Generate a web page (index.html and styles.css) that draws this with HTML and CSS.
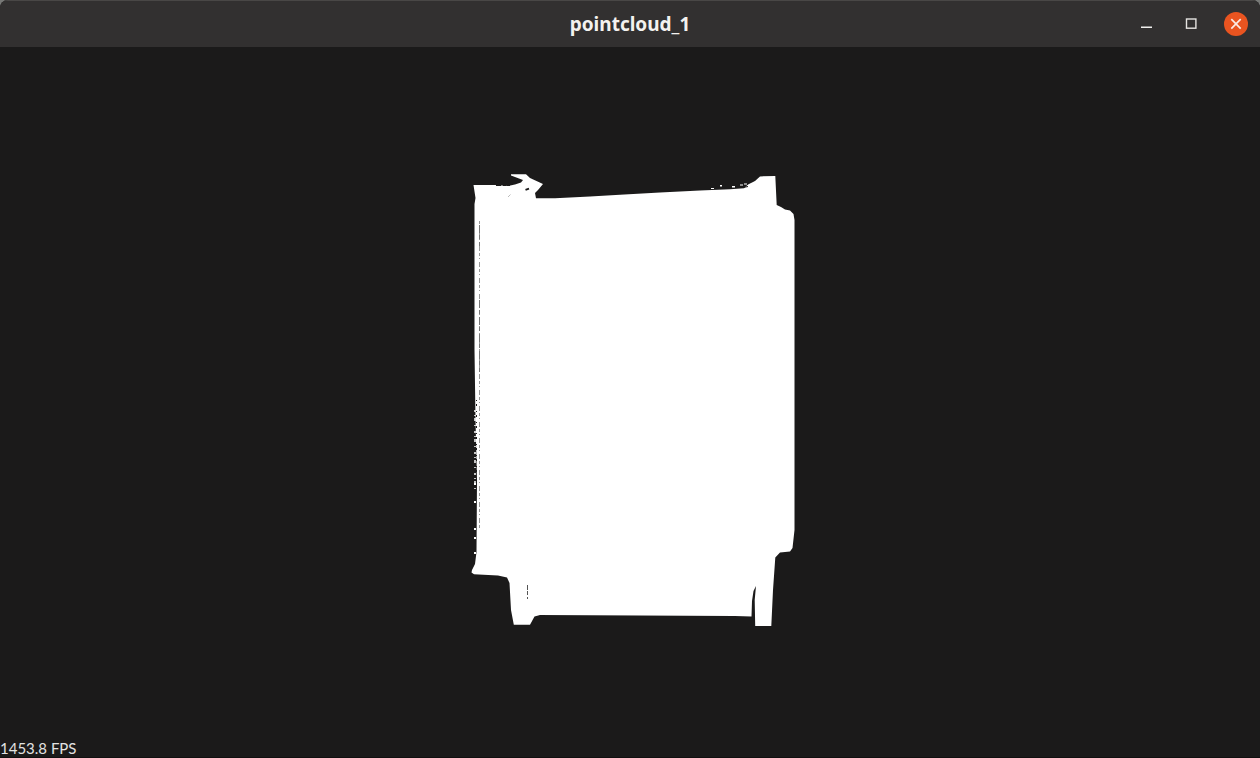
FILE: index.html
```
<!DOCTYPE html>
<html lang="en">
<head>
<meta charset="utf-8">
<title>pointcloud_1</title>
<link rel="stylesheet" href="styles.css">
</head>
<body>
<div class="window">
  <header class="titlebar">
    <h1 class="title">pointcloud_1</h1>
    <div class="controls">
      <button class="control" type="button" aria-label="Minimize">
        <svg width="24" height="24" viewBox="0 0 24 24"><path d="M7 14.500h11v1.500h-11z" fill="#f0efed"/></svg>
      </button>
      <button class="control" type="button" aria-label="Maximize">
        <svg width="24" height="24" viewBox="0 0 24 24"><rect x="7.500" y="7" width="9.400" height="9.200" fill="none" stroke="#e6e4e1" stroke-width="1.400"/></svg>
      </button>
      <button class="control close" type="button" aria-label="Close">
        <svg width="24" height="24" viewBox="0 0 24 24"><path d="M7.300 7.200l9.400 9.400M16.700 7.200l-9.400 9.400" fill="none" stroke="#fbe9e3" stroke-width="1.700"/></svg>
      </button>
    </div>
  </header>
  <main class="viewport">
    <svg class="cloud" viewBox="0 47 1260 711" role="img" aria-label="Point cloud">
      <path fill="#fff" d="M473.500 185H495L508 186L515 184.500L521 182.500L523 180L519 178.500L511 175.500V174.300H526L530 178L543 184L538 190L535 193L536 198.200L555 198.300L590 196.500L620 194.800L660 192.500L700 190.500L730 189.200L744 188.300L748 184.500L755 181L760 176.400L775.300 176L776.700 205L781 207L785 209.500L790 210.500L793.500 214L794.500 220V530L792.500 548L790 551.500L780 552.500L775.300 557.500L773 590L771.300 626H755.200L754.700 600L756 586L753.500 591L752 601L751.500 616.500L735 616L640 615.500L540 615L534.500 616.500L530 624.800H513.800L511 610L509.500 583L507 577.500L498 575.500L474 574.200L471.500 572.500L472 570L475 564L476.500 552L477 480L475.500 420L474.500 350V204L475.500 198Z"/>
      <g fill="none">
        <path stroke="#fff" stroke-width="1.500" stroke-dasharray="2 3 1 2 3 4 1 5" d="M475 410V490"/>
        <path stroke="#1b1a1a" stroke-width="1" stroke-dasharray="1 3 2 5" d="M476.500 400V475"/>
        <path stroke="#999" stroke-dasharray="3 2 1 3 5 2" d="M479.500 221V530"/>
        <path stroke="#777" stroke-dasharray="8 2 4 3" d="M479.500 225V246M479.500 300V372"/>
        <path stroke="#555" stroke-dasharray="5 1 5 1" d="M527.500 585V595M527.500 597V599"/>
        <path stroke="#bbb" d="M508 197l2.500-2.500"/>
        <path stroke="#1b1a1a" stroke-width="1.800" d="M525.500 189.800l3.500-1.200"/>
        <path stroke="#1b1a1a" stroke-dasharray="5 2 3 1" d="M496 185.500H510"/>
        <path stroke="#1b1a1a" d="M743 187.500l5-1M746 184.500l2-.500"/>
      </g>
      <path fill="#fff" d="M720 185h2v1.500h-2zM711 188h3v1h-3zM732 186h3v1.500h-3zM740 184.500h3v1h-3zM744 183.500h3v1h-3zM474 501h2v2h-2zM474 528h2v2h-2zM474 537h2v2h-2zM474 552h2v2h-2zM474 483h2v2h-2z"/>
    </svg>
    <output class="fps">1453.8 FPS</output>
  </main>
</div>
</body>
</html>
```
FILE: styles.css
```
* {
  box-sizing: border-box;
}

body {
  margin: 0;
  background: #777876;
}

.window {
  display: flex;
  flex-direction: column;
  height: 100vh;
  overflow: hidden;
  border-radius: 8px 8px 0 0;
  background: #1b1a1a;
}

.titlebar {
  display: grid;
  grid-template-columns: 1fr auto 1fr;
  align-items: center;
  flex: none;
  height: 47px;
  padding: 0 12px;
  background: #323030;
  border-top: 1px solid #494746;
}

.title {
  grid-column: 2;
  margin: 0;
  color: #f4f2ef;
  font: bold 19px/24px "Noto Sans", "Open Sans", sans-serif;
}

.controls {
  display: flex;
  justify-content: flex-end;
  gap: 21px;
}

.control {
  width: 24px;
  height: 24px;
  padding: 0;
  border: 0;
  border-radius: 50%;
  background: transparent;
}

.control svg {
  display: block;
}

.close {
  background: #e95420;
}

.viewport {
  position: relative;
  flex: 1;
  min-height: 0;
  box-shadow: inset 0 -1px #111010;
}

.cloud {
  display: block;
  width: 100%;
  height: 100%;
}

.fps {
  position: absolute;
  left: 0;
  bottom: 0;
  color: #e2e2e2;
  font: 15px/20px Lato, sans-serif;
}
```
